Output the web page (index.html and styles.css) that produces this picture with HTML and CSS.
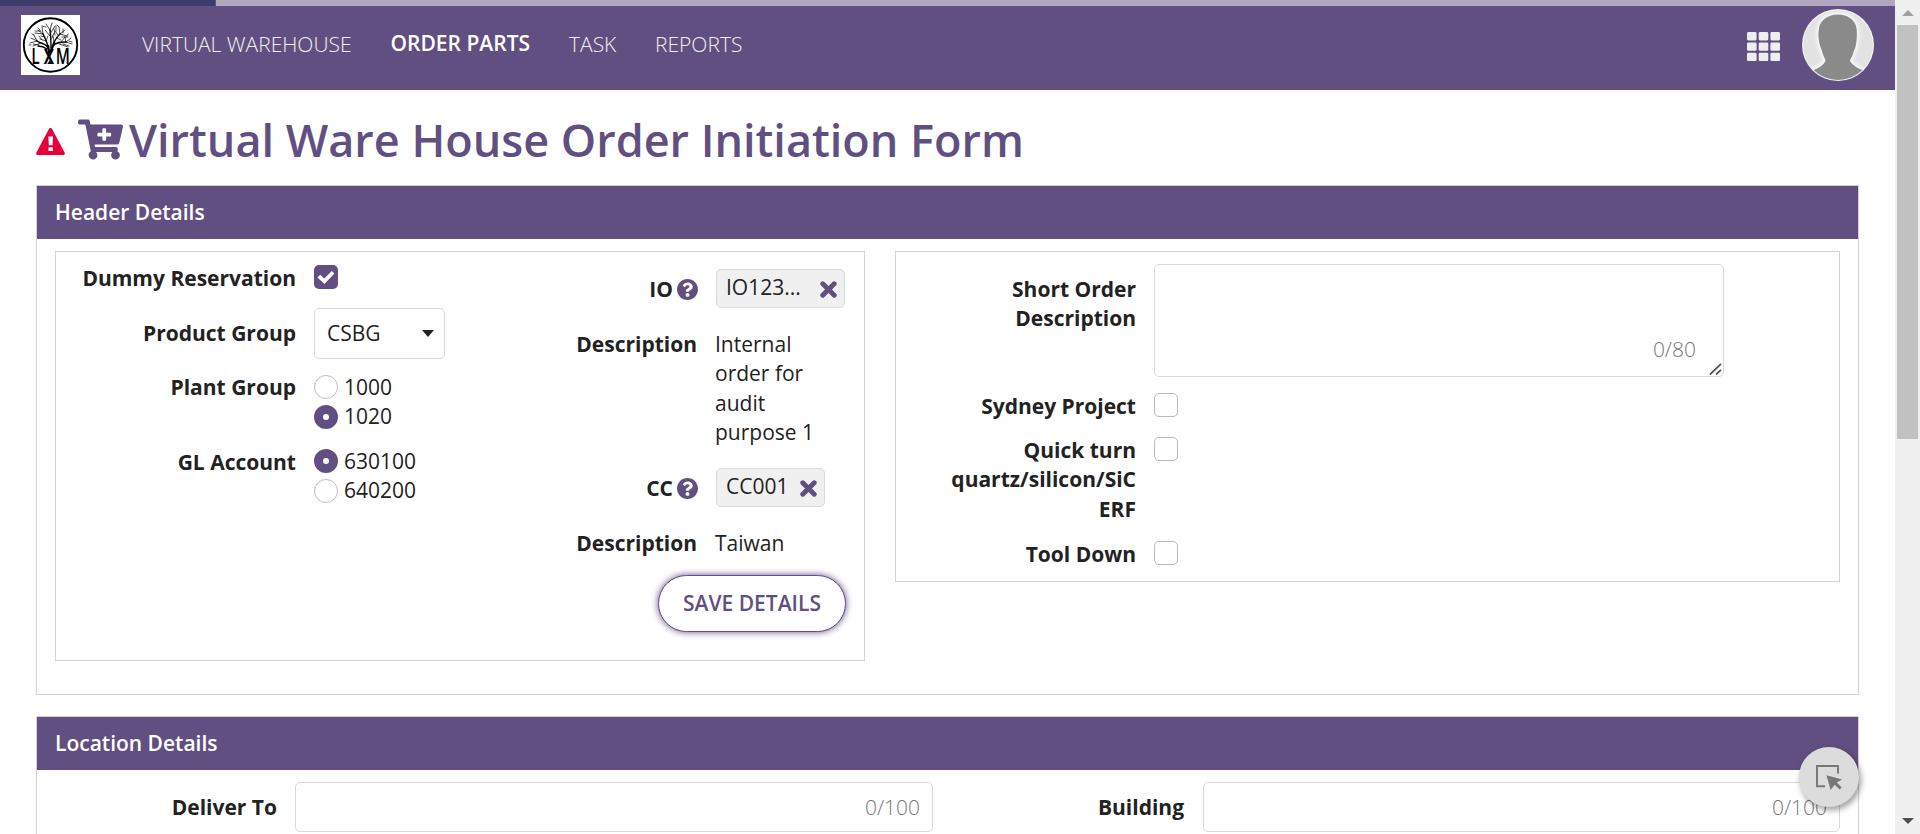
FILE: index.html
```html
<!DOCTYPE html>
<html lang="en">
<head>
<meta charset="utf-8">
<title>Virtual Ware House Order Initiation Form</title>
<link rel="stylesheet" href="styles.css">
</head>
<body>
<svg class="defs" width="0" height="0">
  <symbol id="help" viewBox="8 8 496 496"><path d="M504 256c0 136.997-111.043 248-248 248S8 392.997 8 256C8 119.083 119.043 8 256 8s248 111.083 248 248zM262.655 90c-54.497 0-89.255 22.957-116.549 63.758-3.536 5.286-2.353 12.415 2.715 16.258l34.699 26.31c5.205 3.947 12.621 3.008 16.665-2.122 17.864-22.658 30.113-35.797 57.303-35.797 20.429 0 45.698 13.148 45.698 32.958 0 14.976-12.363 22.667-32.534 33.976C247.128 238.528 216 254.941 216 296v4c0 6.627 5.373 12 12 12h56c6.627 0 12-5.373 12-12v-1.333c0-28.462 83.186-29.647 83.186-106.667 0-58.002-60.165-102-116.531-102zM256 338c-25.365 0-46 20.635-46 46 0 25.364 20.635 46 46 46s46-20.636 46-46c0-25.365-20.635-46-46-46z"/></symbol>
  <symbol id="times" viewBox="0 0 16 16"><path d="M2.6 2.6L13.4 13.4M13.4 2.6L2.6 13.4" fill="none" stroke="#624f82" stroke-width="4.6" stroke-linecap="round"/></symbol>
</svg>
<div class="window">
  <div class="page">
    <div class="progress"><div class="progress-done"></div></div>
    <header class="topbar">
      <svg class="logo" viewBox="0 0 59 60">
        <rect width="59" height="60" fill="#fff"/>
        <circle cx="29.500" cy="30" r="26.700" fill="none" stroke="#000" stroke-width="1.900"/>
        <g fill="none" stroke="#000" stroke-linecap="round">
          <path stroke-width="2.200" stroke-linecap="butt" d="M28.500 40L27 30M29 38L33.500 27"/>
          <path stroke-width="1.400" d="M27 33c-2-5-7-4-11-7M27 32c-1-6-3-9-5-13M30 33c0-7 0-12-1-18M33 28c1-4 3-6 6-9M32 31c3-4 8-4 13-4M26 34c-4-3-7-3-9-3"/>
          <path stroke-width=".7" d="M16 26l-6-3M16 26l-7 2M16 26l-3-6M22 19l-5-4M22 19l-1-7M22 19l-8-1M29 15l-4-6M29 15l2-7M29 19l5-8M29 21l-5-6M39 19l-1-7M39 19l5-4M39 19l7 2M36 23l4 2M45 27l5-4M45 27l6 2M45 27l-1-5M25 26l-6-2M25 26l2-5M33 27l-1-6M38 29l9 3M42 29l6 2M13 20l-2-1M46 21l1-2M38 12l-2-2M20 28l-8 3M21 25l-3-4M35 16l0-5M10 30l-2 0M48 26l3 1M41 22l6 0M40 27l4-5M25 12l-4-1M14 16l6 0M34 20l-1-6M18 30l-6-1M24 22l-4-1M37 20l-3-4M31 23l2-5M42 18l0-4M19 15l-2-2"/>
        </g>
        <text class="logo-text" transform="scale(.7 1)" y="48.900"><tspan x="14.500">L</tspan><tspan class="logo-x" x="32.500">X</tspan><tspan x="49.500">M</tspan></text>
        <path d="M28.700 45L31 49H26.400Z"/>
      </svg>
      <nav class="nav">
        <a class="n1">VIRTUAL WAREHOUSE</a>
        <a class="n2 active">ORDER PARTS</a>
        <a class="n3">TASK</a>
        <a class="n4">REPORTS</a>
      </nav>
      <svg class="apps" viewBox="0 0 33 29" fill="#eee">
        <rect width="9.600" height="8.400" rx="1.400"/><rect x="11.700" width="9.600" height="8.400" rx="1.400"/><rect x="23.400" width="9.600" height="8.400" rx="1.400"/>
        <rect y="10.400" width="9.600" height="8.400" rx="1.400"/><rect x="11.700" y="10.400" width="9.600" height="8.400" rx="1.400"/><rect x="23.400" y="10.400" width="9.600" height="8.400" rx="1.400"/>
        <rect y="20.700" width="9.600" height="8.400" rx="1.400"/><rect x="11.700" y="20.700" width="9.600" height="8.400" rx="1.400"/><rect x="23.400" y="20.700" width="9.600" height="8.400" rx="1.400"/>
      </svg>
      <svg class="avatar" viewBox="0 0 72 72">
        <defs><clipPath id="round"><circle cx="36" cy="36" r="35"/></clipPath>
        <filter id="glow" x="-20%" y="-20%" width="140%" height="140%"><feGaussianBlur stdDeviation="1.6"/></filter></defs>
        <circle cx="36" cy="36" r="36" fill="#f4f4f4"/>
        <g clip-path="url(#round)">
          <circle cx="36" cy="36" r="35" fill="#e2e2e2"/>
          <path filter="url(#glow)" stroke="#f6f6f6" stroke-width="5" fill="#f6f6f6" d="M36 5.500C46 5.500 53 11 54.500 19C55.500 28 54.500 37 51.500 43C50.500 48 48 50 48 52C51 57 56 59 61 61.500L57 72H15L11 61.500C16 59 21 57 23.500 52C23.500 50 21 47 20 42C17 36 15.500 27 17 19C18.500 11 26 5.500 36 5.500Z"/>
          <path fill="#8a8a8a" d="M36 5.500C46 5.500 53 11 54.500 19C55.500 28 54.500 37 51.500 43C50.500 48 48 50 48 52C51 57 56 59 61 61.500L57 72H15L11 61.500C16 59 21 57 23.500 52C23.500 50 21 47 20 42C17 36 15.500 27 17 19C18.500 11 26 5.500 36 5.500Z"/>
        </g>
      </svg>
    </header>

    <main class="content">
      <h1 class="title">
        <svg class="warn" viewBox="0 0 29 27"><path d="M14.500 0C15.300 0 15.800.5 16.200 1.200L28.600 24.400C29.300 25.800 28.600 27 27.200 27H1.800C.4 27-.3 25.800.4 24.400L12.800 1.200C13.200.5 13.700 0 14.500 0Z" fill="#e4003a"/><path d="M12.300 8.500h4.700l-.5 8.800h-3.700zM12.500 19.300h4.300v3.700h-4.300z" fill="#fff"/></svg>
        <svg class="cart" viewBox="0 0 576 512"><path fill="#624f82" d="M504.717 320H211.572l6.545 32h268.418c15.401 0 26.816 14.301 23.403 29.319l-5.517 24.276C523.112 414.668 536 433.828 536 456c0 31.202-25.519 56.444-56.824 55.994-29.823-.429-54.35-24.631-55.155-54.447-.44-16.287 6.085-31.049 16.803-41.548H231.176C241.553 426.165 248 440.326 248 456c0 31.813-26.528 57.431-58.67 55.938-28.54-1.325-51.751-24.385-53.251-52.917-1.158-22.034 10.436-41.455 28.051-51.586L93.883 64H24C10.745 64 0 53.255 0 40V24C0 10.745 10.745 0 24 0h102.529c11.401 0 21.228 8.021 23.513 19.19L159.208 64H551.99c15.401 0 26.816 14.301 23.403 29.319l-47.273 208C525.637 312.246 515.923 320 504.717 320zM408 168h-48v-40c0-8.837-7.163-16-16-16h-16c-8.837 0-16 7.163-16 16v40h-48c-8.837 0-16 7.163-16 16v16c0 8.837 7.163 16 16 16h48v40c0 8.837 7.163 16 16 16h16c8.837 0 16-7.163 16-16v-40h48c8.837 0 16-7.163 16-16v-16c0-8.837-7.163-16-16-16z"/></svg>
        <span class="title-text">Virtual Ware House Order Initiation Form</span>
      </h1>

      <section class="panel">
        <h2 class="panel-head">Header Details</h2>
        <div class="panel-body details">
          <div class="box box-left">
            <div class="col col-a">
              <div class="row r-dummy"><label>Dummy Reservation</label>
                <span class="check on"><svg viewBox="0 0 24 24"><path d="M6.200 12.500L10.300 16.400L17.800 8.600" fill="none" stroke="#fff" stroke-width="3.800" stroke-linecap="square"/></svg></span></div>
              <div class="row r-product"><label>Product Group</label>
                <div class="select">CSBG<i class="caret"></i></div></div>
              <div class="row r-plant"><label>Plant Group</label>
                <div class="radios"><span class="opt"><i class="radio"></i>1000</span><span class="opt"><i class="radio on"></i>1020</span></div></div>
              <div class="row r-gl"><label>GL Account</label>
                <div class="radios"><span class="opt"><i class="radio on"></i>630100</span><span class="opt"><i class="radio"></i>640200</span></div></div>
            </div>
            <div class="col col-b">
              <div class="row r-io"><label class="helped">IO<svg class="help"><use href="#help"/></svg></label>
                <span class="chip chip-io">IO123...<svg class="times"><use href="#times"/></svg></span></div>
              <div class="row r-iodesc"><label>Description</label><span class="value">Internal order for audit purpose 1</span></div>
              <div class="row r-cc"><label class="helped">CC<svg class="help"><use href="#help"/></svg></label>
                <span class="chip chip-cc">CC001<svg class="times"><use href="#times"/></svg></span></div>
              <div class="row r-ccdesc"><label>Description</label><span class="value">Taiwan</span></div>
              <button class="save">SAVE DETAILS</button>
            </div>
          </div>
          <div class="box box-right">
            <div class="row r-short"><label>Short Order<br>Description</label>
              <div class="area"><span class="count">0/80</span><svg class="grip" viewBox="0 0 13 12"><path d="M1 11.500L12 .8M7 11.500L12 6.800" stroke="#555" stroke-width="1.800" fill="none"/></svg></div></div>
            <div class="row r-sydney"><label>Sydney Project</label><span class="check"></span></div>
            <div class="row r-quick"><label>Quick turn quartz/silicon/SiC ERF</label><span class="check"></span></div>
            <div class="row r-tool"><label>Tool Down</label><span class="check"></span></div>
          </div>
        </div>
      </section>

      <section class="panel">
        <h2 class="panel-head">Location Details</h2>
        <div class="panel-body location">
          <label class="deliver">Deliver To</label><div class="input"><span class="count">0/100</span></div>
          <label class="building">Building</label><div class="input"><span class="count">0/100</span></div>
        </div>
      </section>
    </main>
    <div class="fab"><svg viewBox="0 0 26 25"><path d="M9 21.200H1V1H22V8.500" fill="none" stroke="#777" stroke-width="1.900"/><path d="M10.500 10.200L26 14.400L20.800 17.600L25.700 22.500L23.600 24.600L18.700 19.700L14.600 25Z" fill="#777"/></svg></div>
  </div>
  <div class="scrollbar"><i class="arrow up"></i><div class="thumb"></div><i class="arrow down"></i></div>
</div>
</body>
</html>
```

FILE: styles.css
```css
* { box-sizing: border-box; }
body { margin: 0; font: 21px/29.4px "Open Sans", "Noto Sans", sans-serif; color: #222; background: #fff; overflow: hidden; }
.defs { position: absolute; }
.window { display: flex; height: 834px; overflow: hidden; }
.page { position: relative; width: 1895px; overflow: hidden; }
.progress { height: 6px; background: #b0a6c0; }
.progress-done { width: 216px; height: 6px; background: #3f3b6c; border-right: 1px solid #5d5580; }

.topbar { display: flex; height: 84px; background: #624f82; color: #f0f0f0; }
.logo { width: 59px; height: 60px; margin: 9px 0 0 21px; }
.logo-text { font: 600 22px "Open Sans", sans-serif; }
.logo-x { font-weight: 700; }
.nav { display: flex; flex: 1; padding: 24px 0 0 62px; font-weight: 300; white-space: nowrap; }
.nav a { flex: none; }
.n1 { width: 248.5px; }
.n2 { width: 178.5px; }
.n3 { width: 86px; }
.active { font-weight: 600; color: #fff; margin-top: -1px; }
.apps { width: 33px; height: 29px; margin: 26px 22px 0 0; }
.avatar { width: 72px; height: 72px; margin: 3px 21px 0 0; }

.content { padding: 0 36px; }
.title { display: flex; margin: 0; height: 95px; font-size: 45px; line-height: 62px; font-weight: 600; color: #624f82; }
.warn { width: 29px; height: 27px; margin: 38px 13px 0 0; }
.cart { width: 45px; height: 41px; margin: 29px 6px 0 0; }
.title-text { padding-top: 19px; white-space: nowrap; }

.panel { border: 1px solid #d2d2d2; height: 510px; margin-bottom: 21px; }
.panel-head { margin: 0; height: 53px; padding: 12px 18px; background: #624f82; color: #fff; font-size: 21px; line-height: 29.4px; font-weight: 600; }
.details { display: flex; align-items: flex-start; padding: 12px 18px 0; gap: 30px; }
.box { flex: none; border: 1px solid #d2d2d2; }
.box-left { display: flex; width: 810px; height: 410px; }
.box-right { width: 945px; height: 331px; padding-top: 12px; }
label { padding-top: 1px; font-weight: 700; text-align: right; }
.value { padding-top: 1px; }
.row { display: grid; align-items: start; }
.col-a { width: 400px; }
.col-a .row { grid-template-columns: 240px 1fr; column-gap: 18px; }
.col-b { width: 408px; padding-top: 17px; }
.col-b .row { grid-template-columns: 241px 129px; column-gap: 19px; }
.box-right .row { grid-template-columns: 240px 1fr; column-gap: 18px; }

.r-dummy { padding-top: 11px; height: 56px; }
.r-product { height: 64px; }
.r-product label { padding-top: 11px; }
.r-plant { height: 74px; }
.r-gl label { padding-top: 2px; }
.check { width: 24px; height: 24px; border: 1px solid #bbb; border-radius: 5px; margin-top: 2px; }
.check.on { background: #624f82; border: 0; }
.check svg { display: block; width: 24px; height: 24px; }
.select { display: flex; align-items: center; justify-content: space-between; width: 131px; height: 51px; padding: 0 10px 0 12px; border: 1px solid #dadada; border-radius: 5px; }
.caret { border: 6.5px solid transparent; border-top: 7px solid #222; border-bottom: 0; }
.radios { display: flex; flex-direction: column; }
.opt { display: flex; height: 30px; gap: 6px; line-height: 30px; }
.opt + .opt { line-height: 28px; }
.radio { width: 24px; height: 24px; margin-top: 3px; border: 1px solid #bbb; border-radius: 50%; }
.radio.on { border: 9px solid #624f82; }

.helped { display: flex; justify-content: flex-end; gap: 4px; margin-right: -1px; }
.help { width: 21px; height: 21px; margin-top: 4px; fill: #624f82; }
.r-io { height: 60px; }
.r-io label, .r-cc label { padding-top: 6px; }
.r-iodesc { height: 139px; }
.value { margin-left: -1px; }
.r-cc { height: 60px; }
.chip { display: flex; justify-content: space-between; align-items: flex-start; height: 39px; padding: 3px 7px 0 9px; border: 1px solid #dadada; border-radius: 5px; background: #f0f0f0; }
.chip-cc { width: 109px; }
.times { width: 17px; height: 17px; margin-top: 8px; }
.r-ccdesc { height: 47px; }
.save { display: block; width: 188px; height: 57px; margin-left: 202px; padding: 0; border: 1px solid #624f82; border-radius: 29px; background: #fff; color: #624f82; font: 600 21px/29px "Open Sans", sans-serif; box-shadow: 0 0 7px #624f82; }

.r-short { height: 126px; }
.r-sydney { height: 44px; }
.r-quick { height: 104px; }
.box-right label { padding-top: 2px; }
.box-right .r-short label { padding-top: 11px; }
.r-quick label { padding-left: 40px; }
.box-right .check { margin-top: 3px; }
.area { position: relative; display: flex; align-items: flex-end; justify-content: flex-end; width: 570px; height: 113px; padding: 0 27px 12px 0; border: 1px solid #dadada; border-radius: 5px; }
.grip { position: absolute; right: 1px; bottom: 1px; width: 13px; height: 12px; }
.count { font-weight: 300; color: #777; }

.location { display: grid; grid-template-columns: 222px 638px 234px 637px; column-gap: 18px; padding: 12px 0 0 18px; }
.location label { padding-top: 11px; }
.location .building { padding-right: 1px; }
.input { display: flex; align-items: center; justify-content: flex-end; height: 50px; padding: 2px 12px 0 0; border: 1px solid #dadada; border-radius: 5px; }

.fab { position: absolute; left: 1799px; top: 747px; width: 60px; height: 60px; padding: 18px 17px; border-radius: 50%; background: #dcdcdc; box-shadow: 2px 3px 6px rgba(0,0,0,.4); }
.fab svg { display: block; width: 26px; height: 25px; }

.scrollbar { display: flex; flex-direction: column; align-items: center; width: 25px; height: 834px; background: #f0f0f0; }
.thumb { width: 21px; height: 414px; margin-top: 9px; background: #c1c1c1; }
.arrow { border: 6px solid transparent; }
.up { border-top: 0; border-bottom-color: #a0a0a0; margin-top: 10px; }
.down { border-bottom: 0; border-top-color: #505050; margin-top: auto; margin-bottom: 10px; }
```
